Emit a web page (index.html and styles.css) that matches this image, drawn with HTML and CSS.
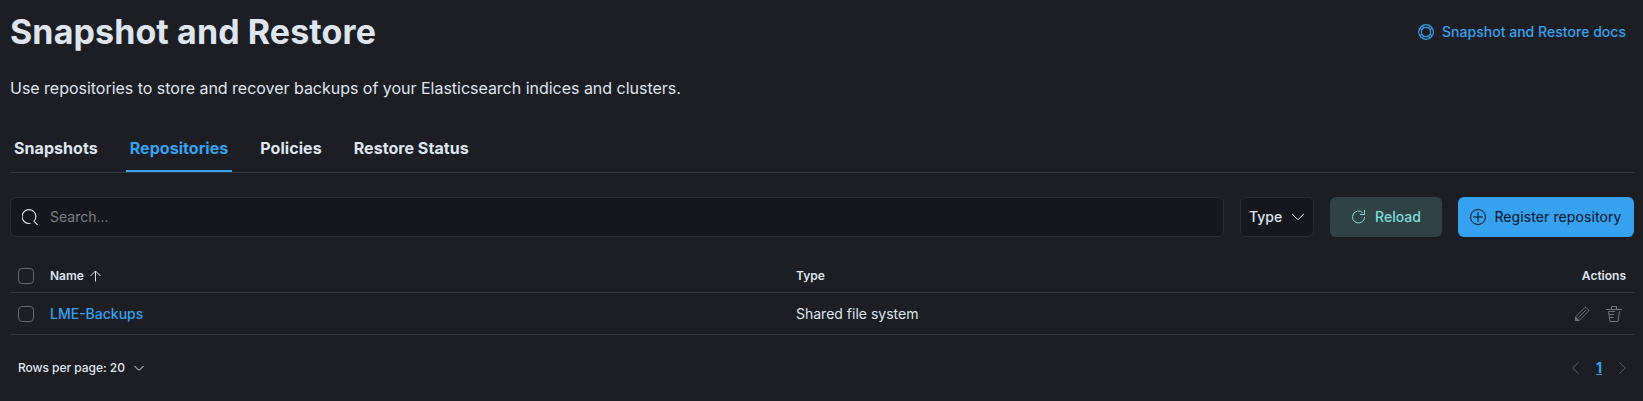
FILE: index.html
```html
<!DOCTYPE html>
<html lang="en">
<head>
<meta charset="utf-8">
<title>Snapshot and Restore</title>
<link rel="stylesheet" href="styles.css">
</head>
<body>
<main class="page">
  <header class="header">
    <h1 class="title">Snapshot and Restore</h1>
    <a class="docs" href="#">
      <svg class="icon bold" viewBox="0 0 16 16" width="16" height="16"><circle cx="8" cy="8" r="7.4"/><circle cx="8" cy="8" r="4.600"/><path d="M4 1.800 6 4.200M1.800 4 4.200 6M12 1.800 10 4.200M14.200 4 11.800 6M4 14.200 6 11.800M1.800 12 4.200 10M12 14.200 10 11.800M14.200 12 11.800 10"/></svg>
      <span>Snapshot and Restore docs</span>
    </a>
  </header>
  <p class="description">Use repositories to store and recover backups of your Elasticsearch indices and clusters.</p>
  <nav class="tabs">
    <a class="tab">Snapshots</a>
    <a class="tab tab-active">Repositories</a>
    <a class="tab">Policies</a>
    <a class="tab">Restore Status</a>
  </nav>
  <section class="toolbar">
    <label class="search">
      <svg class="icon bold" viewBox="0 0 16 16" width="16" height="16"><path d="M8.500 14.300A6.900 6.900 0 1 1 12 12.300L15.600 16"/></svg>
      <input class="search-input" type="text" placeholder="Search...">
    </label>
    <button class="filter">Type
      <svg class="icon" viewBox="0 0 16 16" width="16" height="16"><path d="m2.2 5 5.1 5.1a1 1 0 0 0 1.4 0L13.800 5"/></svg>
    </button>
    <button class="button reload">
      <svg class="icon" viewBox="0 0 16 16" width="16" height="16"><path d="M13.500 1v4.500H9M11.700 3.700A6 6 0 1 0 13.500 8"/></svg>
      <span>Reload</span>
    </button>
    <button class="button register">
      <svg class="icon" viewBox="0 0 16 16" width="16" height="16"><circle cx="8" cy="8" r="7.500"/><path d="M8 3v10M3 8h10"/></svg>
      <span>Register repository</span>
    </button>
  </section>
  <section class="table">
    <div class="row row-head">
      <span class="checkbox"></span>
      <span class="cell-name">Name
        <svg class="icon" viewBox="0 0 12 12" width="12" height="12"><path d="M5.500 11.500V1M.5 6l5-5 5 5"/></svg>
      </span>
      <span class="cell-type">Type</span>
      <span class="cell-actions">Actions</span>
    </div>
    <div class="row row-item">
      <span class="checkbox"></span>
      <a class="cell-name link" href="#">LME-Backups</a>
      <span class="cell-type">Shared file system</span>
      <span class="cell-actions actions">
        <svg class="icon" viewBox="0 0 16 16" width="16" height="16"><path d="M1.500 10.800 10.700 1.600a1 1 0 0 1 1.400 0l2.300 2.300a1 1 0 0 1 0 1.400L5.200 14.500H1.500zM4.300 11.700l7.500-7.500"/><path class="solid" d="M1.500 11v3.500H5z"/></svg>
        <svg class="icon" viewBox="0 0 16 16" width="16" height="16"><path d="M0 3.500h16M5.500 3.500v-3h5v3M2.500 5.500l1.500 10h8l1.500-10M2.500 5.500h6.500M3.500 8.500H8M4 11.500h3.500"/></svg>
      </span>
    </div>
  </section>
  <footer class="footer">
    <span class="page-size">Rows per page: 20
      <svg class="icon" viewBox="0 0 12 12" width="12" height="12"><path d="m1.500 4 4 4a.7.7 0 0 0 1 0l4-4"/></svg>
    </span>
    <span class="pager">
      <svg class="icon" viewBox="0 0 8 14" width="8" height="14"><path d="M6.500 1.200 1.300 6.400a.8.8 0 0 0 0 1.200l5.200 5.200"/></svg>
      <a class="current" href="#">1</a>
      <svg class="icon" viewBox="0 0 8 14" width="8" height="14"><path d="m1.500 1.200 5.200 5.200a.8.8 0 0 1 0 1.200l-5.200 5.200"/></svg>
    </span>
  </footer>
</main>
</body>
</html>
```
FILE: styles.css
```css
* { box-sizing: border-box; }
body {
  margin: 0;
  background: #1d1e24;
  color: #dfe5ef;
  font: 14px/20px Inter, "Liberation Sans", sans-serif;
}
button, input { font: inherit; color: inherit; }
a { color: #36a2ef; text-decoration: none; }
.page { height: 401px; padding: 12px 9px 0 10px; overflow: hidden; }
.icon { display: block; flex: none; fill: none; stroke: currentColor; stroke-width: 1; }
.bold { stroke-width: 1.1; }
.solid { fill: currentColor; }
.header { display: flex; align-items: center; justify-content: space-between; height: 40px; padding-right: 8px; }
.title { margin: 0; font-size: 34px; line-height: 40px; font-weight: 700; letter-spacing: 0.1px; }
.docs { display: flex; align-items: center; gap: 8px; font-weight: 500; letter-spacing: 0.03px; }
.description { margin: 24px 0 0; font-size: 16px; line-height: 24px; letter-spacing: -0.02px; }
.tabs { display: flex; gap: 24px; height: 49px; margin-top: 24px; border-bottom: 1px solid #343741; }
.tab { height: 48px; padding: 0 4px; color: #dfe5ef; font-size: 16px; line-height: 49px; font-weight: 700; letter-spacing: 0.05px; }
.tab-active { color: #36a2ef; border-bottom: 2px solid #36a2ef; }
.toolbar { display: flex; gap: 16px; height: 40px; margin-top: 24px; }
.search { display: flex; flex: 1; align-items: center; gap: 12px; padding: 0 11px; border: 1px solid #2b2c33; border-radius: 6px; background: #16171c; }
.search-input { flex: 1; min-width: 0; padding: 0; border: 0; outline: 0; background: none; }
.search-input::placeholder { color: #7a7e87; opacity: 1; }
.filter { display: flex; align-items: center; justify-content: space-between; width: 74px; padding: 0 7px 0 8px; border: 1px solid #2b2c33; border-radius: 6px; background: #16171c; font-weight: 500; }
.button { display: flex; align-items: center; justify-content: center; border: 0; border-radius: 6px; padding: 0; }
.reload { width: 112px; gap: 8px; background: #304246; color: #7dded8; font-weight: 500; }
.register { width: 176px; gap: 8px; background: #36a2ef; color: #07101f; letter-spacing: 0.1px; }
.table { margin-top: 23px; }
.row { display: grid; grid-template-columns: 16px 746px 1fr auto; column-gap: 8px; align-items: center; padding: 0 8px; border-bottom: 1px solid #343741; }
.row-head { height: 33px; font-size: 12px; font-weight: 600; }
.row-item { height: 42px; }
.checkbox { width: 16px; height: 16px; border: 1px solid #65676d; border-radius: 4px; }
.cell-name { display: flex; align-items: center; gap: 6px; padding-left: 8px; }
.link { font-weight: 500; }
.actions { display: flex; gap: 16px; padding-right: 4px; color: #73757a; }
.footer { display: flex; align-items: center; justify-content: space-between; height: 66px; padding: 0 8px; font-size: 12px; font-weight: 500; }
.page-size { display: flex; align-items: center; gap: 8px; letter-spacing: -0.03px; }
.pager { display: flex; align-items: center; gap: 16px; color: #66686e; }
.current { font-size: 14px; font-weight: 700; text-decoration: underline; }
```
